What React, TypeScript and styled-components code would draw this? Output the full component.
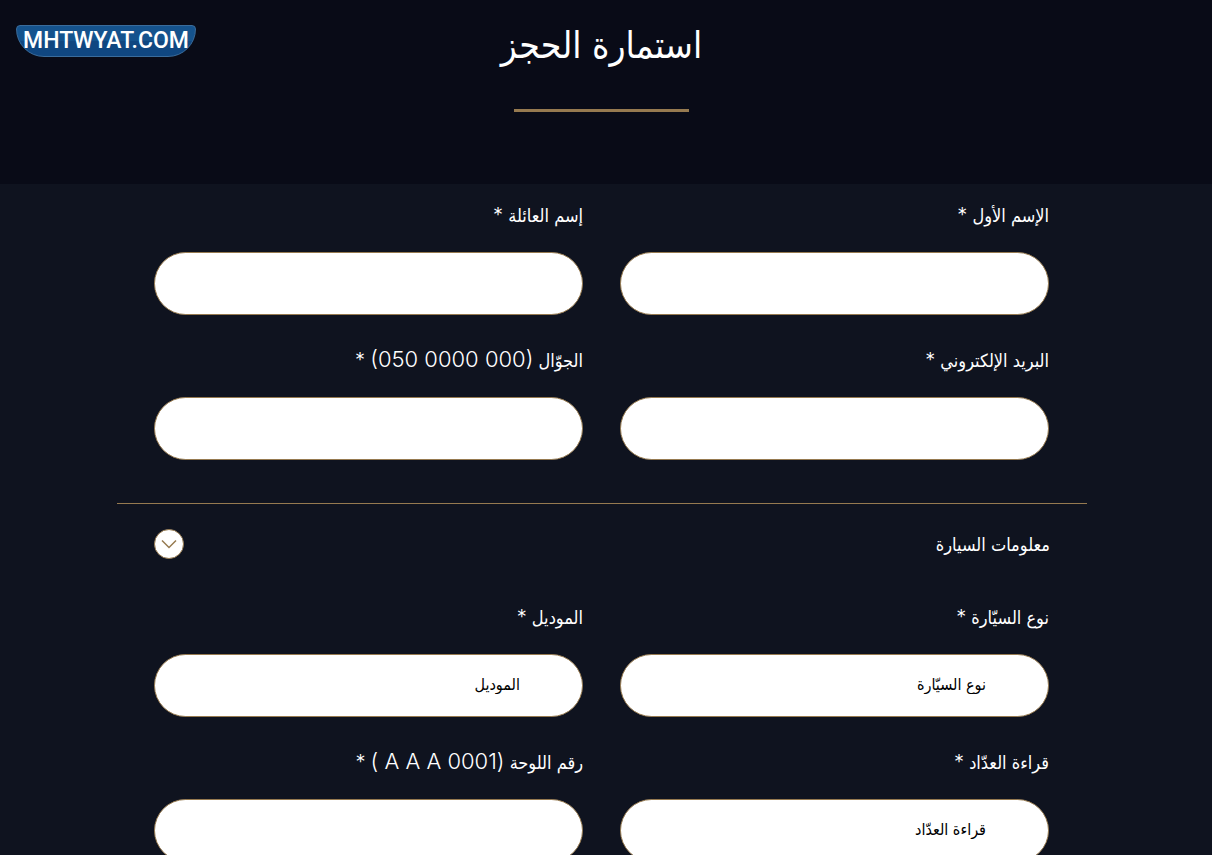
import { useState } from "react";
import styled, { createGlobalStyle } from "styled-components";

const gold = "#967a50";

const GlobalStyle = createGlobalStyle`
  *, *::before, *::after { box-sizing: border-box; }
  body {
    margin: 0;
    background: #0f131f;
    color: #fff;
    font-family: "DejaVu Sans Condensed", "DejaVu Sans", sans-serif;
  }
`;

const Header = styled.header`
  position: relative;
  min-height: 184px;
  padding: 16px 9px 0 0;
  background: #090b17;
  display: flex;
  flex-direction: column;
  align-items: center;
`;

const Brand = styled.a`
  position: absolute;
  top: 25px;
  left: 16px;
  width: 180px;
  height: 32px;
  display: flex;
  align-items: center;
  justify-content: center;
  border: 1px solid #3a6c9c;
  border-radius: 4px 4px 28px 28px;
  background: linear-gradient(#15538d 50%, #104781 50%);
  color: #fff;
  font: 500 23px/30px Roboto, sans-serif;
  text-decoration: none;
`;

const Title = styled.h1`
  margin: 0;
  font-size: 37px;
  font-weight: 400;
  line-height: 60px;
`;

const TitleRule = styled.hr`
  width: 175px;
  height: 3px;
  margin: 33px 0 0;
  border: 0;
  background: ${gold};
`;

const Form = styled.form`
  max-width: 978px;
  margin: 0 auto;
  padding: 14px 8px 28px 0;
`;

const FieldGrid = styled.div`
  display: grid;
  grid-template-columns: 1fr 1fr;
  gap: 28px 37px;
  padding: 0 38px 0 37px;
`;

const Field = styled.div`
  display: flex;
  flex-direction: column;
  gap: 18px;
`;

const Label = styled.label`
  height: 36px;
  font-size: 18px;
  line-height: 36px;
  white-space: nowrap;
`;

const Sample = styled.bdi`
  font-family: Inter, sans-serif;
  font-size: 22px;
  font-weight: 300;
  line-height: 1;
`;

const Required = styled.span`
  font-family: Inter, sans-serif;
  font-size: 20px;
  font-weight: 300;
  line-height: 1;
`;

const TextBox = styled.input`
  width: 100%;
  height: 63px;
  padding: 0 62px 2px;
  border: 1px solid ${gold};
  border-radius: 32px;
  background: #fff;
  color: #000;
  font-family: inherit;
  font-size: 16px;
  &::placeholder { color: #000; opacity: 1; }
`;

const Divider = styled.hr`
  height: 1px;
  margin: 43px 0 0;
  border: 0;
  background: ${gold};
`;

const SectionBar = styled.div`
  display: flex;
  align-items: center;
  justify-content: space-between;
  padding: 25px 37px 41px;
`;

const SectionTitle = styled.h2`
  margin: 0;
  padding-top: 2px;
  font-size: 18px;
  font-weight: 400;
  line-height: 28px;
`;

const Toggle = styled.button`
  width: 30px;
  height: 30px;
  padding: 0;
  display: grid;
  place-items: center;
  border: 1px solid ${gold};
  border-radius: 50%;
  background: #fff;
  cursor: pointer;
`;

type FieldSpec = { id: string; label: string; sample?: string; placeholder?: string; type?: string };

const personal: FieldSpec[] = [
  { id: "first", label: "الإسم الأول" },
  { id: "family", label: "إسم العائلة" },
  { id: "email", label: "البريد الإلكتروني", type: "email" },
  { id: "mobile", label: "الجوّال", sample: "(050 0000 000)", type: "tel" },
];

const car: FieldSpec[] = [
  { id: "make", label: "نوع السيّارة", placeholder: "نوع السيّارة" },
  { id: "model", label: "الموديل", placeholder: "الموديل" },
  { id: "odometer", label: "قراءة العدّاد", placeholder: "قراءة العدّاد" },
  { id: "plate", label: "رقم اللوحة", sample: "( A  A  A 0001)" },
];

function Fields({ items }: { items: FieldSpec[] }) {
  return (
    <FieldGrid>
      {items.map(({ id, label, sample, placeholder, type = "text" }) => (
        <Field key={id}>
          <Label htmlFor={id}>
            {label} {sample && <><Sample dir="ltr">{sample}</Sample> </>}
            <Required>*</Required>
          </Label>
          <TextBox id={id} name={id} type={type} dir="rtl" placeholder={placeholder} required />
        </Field>
      ))}
    </FieldGrid>
  );
}

export default function App() {
  const [open, setOpen] = useState(true);
  return (
    <div dir="rtl" lang="ar">
      <GlobalStyle />
      <Header>
        <Brand href="#" dir="ltr">MHTWYAT.COM</Brand>
        <Title>استمارة الحجز</Title>
        <TitleRule />
      </Header>
      <Form>
        <Fields items={personal} />
        <Divider />
        <SectionBar>
          <SectionTitle>معلومات السيارة</SectionTitle>
          <Toggle type="button" aria-label="معلومات السيارة" aria-expanded={open} onClick={() => setOpen(!open)}>
            <svg width="16" height="10" viewBox="0 0 16 10" fill="none" stroke={gold} strokeWidth="1.5">
              <path d="M1 1.5 8 8.5 15 1.5" />
            </svg>
          </Toggle>
        </SectionBar>
        {open && <Fields items={car} />}
      </Form>
    </div>
  );
}
